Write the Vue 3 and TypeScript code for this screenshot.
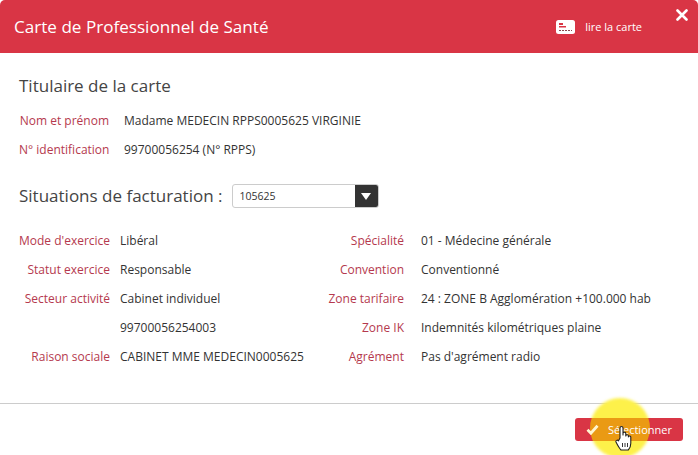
<template>
  <div class="modal">
    <header class="head">
      <h1>Carte de Professionnel de Santé</h1>
      <button class="read" type="button">
        <svg width="19" height="14" viewBox="0 0 19 14">
          <rect x="0" y="0" width="19" height="14" rx="2.5" fill="#fff" />
          <rect x="3" y="3" width="4" height="2" fill="#d93545" />
          <rect x="3" y="6" width="7" height="1.5" fill="#d93545" />
          <path d="M3 10.5h13" stroke="#8a4a50" stroke-width="1.2" stroke-dasharray="2 1" />
        </svg>
        <span>lire la carte</span>
      </button>
      <svg class="close" width="12" height="12" viewBox="0 0 12 12">
        <path d="M1.5 1.5l9 9M10.5 1.5l-9 9" stroke="#fff" stroke-width="2.6" stroke-linecap="round" />
      </svg>
    </header>

    <main class="body">
      <h2>Titulaire de la carte</h2>
      <div class="holder">
        <template v-for="r in holder" :key="r[0]">
          <label>{{ r[0] }}</label>
          <span>{{ r[1] }}</span>
        </template>
      </div>

      <div class="situation">
        <h2>Situations de facturation :</h2>
        <div class="select">
          <span>105625</span>
          <i><b></b></i>
        </div>
      </div>

      <div class="details">
        <div v-for="(col, i) in columns" :key="i" class="col" :class="'col' + i">
          <template v-for="(r, j) in col" :key="j">
            <label>{{ r[0] }}</label>
            <span>{{ r[1] }}</span>
          </template>
        </div>
      </div>
    </main>

    <footer class="foot">
      <div class="halo"></div>
      <button class="select-btn" type="button">
        <em class="tint"></em>
        <svg width="13" height="11" viewBox="0 0 13 11">
          <path d="M1.5 5.8l3.4 3.4 6.6-7.4" fill="none" stroke="#fff6d0" stroke-width="2.8" />
        </svg>
        <span>Sélectionner</span>
      </button>
      <svg class="hand" width="17" height="26" viewBox="0 0 17 26">
        <path d="M5 13V3a1.5 1.5 0 0 1 3 0v7l0-1.500a1.400 1.400 0 0 1 2.800 0V11a1.300 1.300 0 0 1 2.600 .2V12a1.200 1.200 0 0 1 2.400 .3v6c0 3-1.500 5.700-2.500 6.700H6c-1.500-1.500-3-4-5-8-.6-1.300 1.400-2.600 2.500-1.200z" fill="#fff" stroke="#222" stroke-width="1.100" stroke-linejoin="round" />
        <path d="M7.500 18v4M10 18v4M12.500 18v4" stroke="#222" stroke-width=".9" />
      </svg>
    </footer>
  </div>
</template>

<script setup lang="ts">
const holder: [string, string][] = [
  ['Nom et prénom', 'Madame MEDECIN RPPS0005625 VIRGINIE'],
  ['N° identification', '99700056254 (N° RPPS)'],
]
const columns: [string, string][][] = [
  [
    ["Mode d'exercice", 'Libéral'],
    ['Statut exercice', 'Responsable'],
    ['Secteur activité', 'Cabinet individuel'],
    ['', '99700056254003'],
    ['Raison sociale', 'CABINET MME MEDECIN0005625'],
  ],
  [
    ['Spécialité', '01 - Médecine générale'],
    ['Convention', 'Conventionné'],
    ['Zone tarifaire', '24 : ZONE B Agglomération +100.000 hab'],
    ['Zone IK', 'Indemnités kilométriques plaine'],
    ['Agrément', "Pas d'agrément radio"],
  ],
]
</script>

<style>
html, body { margin: 0; background: #fff; overflow: hidden; }
</style>

<style scoped>
.modal { width: 698px; height: 455px; display: flex; flex-direction: column; font-family: "Open Sans", "Noto Sans", sans-serif; background: #fff; color: #333; overflow: hidden; }
.head { height: 53px; flex: none; display: flex; align-items: center; background: #d93545; color: #fff; border-radius: 5px 5px 0 0; position: relative; padding: 0 14px; box-sizing: border-box; }
.head h1 { margin: 0; flex: 1; font-size: 17.1px; font-weight: 400; }
.read { display: flex; align-items: center; gap: 10px; border: 0; padding: 0; margin-right: 42px; background: none; color: #fff; font: inherit; font-size: 11px; }
.close { position: absolute; right: 10px; top: 9px; }
.body { flex: 1; padding: 21px 19px 0; }
h2 { margin: 0; font-size: 17px; line-height: 24px; font-weight: 400; color: #444; white-space: nowrap; }
.holder { display: grid; grid-template-columns: 90px auto; justify-content: start; column-gap: 15px; row-gap: 11px; margin-top: 14px; font-size: 12px; line-height: 18px; }
label { color: #b5394e; text-align: right; white-space: nowrap; direction: rtl; unicode-bidi: plaintext; }
.situation { display: flex; align-items: center; gap: 9px; margin-top: 25px; }
.select { width: 145px; height: 22px; display: flex; justify-content: space-between; align-items: stretch; border: 1px solid #ccc; border-radius: 3px; font-size: 10.5px; line-height: 22px; overflow: hidden; }
.select span { padding-left: 7px; }
.select i { width: 23px; background: #333; display: flex; align-items: center; justify-content: center; }
.select b { width: 0; height: 0; border: 5.500px solid transparent; border-top: 7px solid #fff; border-bottom: 0; }
.details { display: flex; margin-top: 24px; font-size: 12px; line-height: 18px; }
.col { display: grid; justify-content: start; column-gap: 10px; row-gap: 11px; }
.col0 { grid-template-columns: 91px auto; width: 301px; flex: none; }
.col1 { grid-template-columns: 84px auto; column-gap: 17px; }
.col span { white-space: nowrap; }
.foot { flex: none; height: 52px; border-top: 1px solid #ccc; box-sizing: border-box; position: relative; display: flex; justify-content: flex-end; padding: 14px 15px 0 0; }
.select-btn { width: 108px; height: 23px; display: flex; align-items: center; gap: 9px; padding: 0 0 0 11px; border: 0; border-radius: 3px; background: #d93545; color: #fff; font: inherit; font-size: 11px; position: relative; overflow: hidden; }
.select-btn svg, .select-btn span { position: relative; }
.halo { position: absolute; left: 590px; top: -6px; width: 60px; height: 60px; border-radius: 50%; background: #fdf14a; filter: blur(1.5px); }
.tint { position: absolute; left: 15px; top: -20px; width: 60px; height: 60px; border-radius: 50%; background: #ea9a14; }
.hand { position: absolute; left: 615px; top: 21px; }
</style>
